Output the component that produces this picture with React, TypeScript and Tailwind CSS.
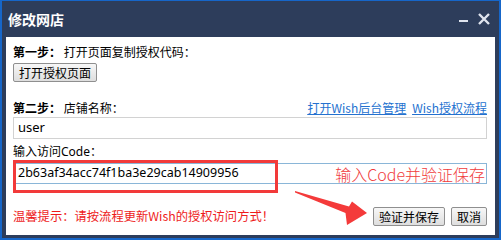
import React from 'react'

const font = { fontFamily: "'Noto Sans CJK SC', 'Noto Sans', sans-serif" }
const latin = { fontFamily: "'Noto Sans', 'Noto Sans CJK SC', sans-serif" }

function Btn({ children }: { children: React.ReactNode }) {
  return (
    <button className="h-[19px] px-[5px] rounded-[2px] border border-[#8f8f8f] bg-gradient-to-b from-[#f7f7f7] to-[#dedede] text-[12px] leading-none text-black">
      {children}
    </button>
  )
}

export default function App() {
  return (
    <div className="relative w-[501px] h-[240px] bg-[#1666c9] pt-[1px] px-[2px] pb-[2px]" style={font}>
      <div className="flex flex-col h-full bg-[#2d3d5b]">
        {/* Title bar */}
        <div className="flex items-center h-[36px] pl-[6px] pr-[9px]">
          <span className="text-white font-bold text-[14px] leading-none">修改网店</span>
          <div className="ml-auto flex items-center gap-[9px]">
            <svg width="10" height="12" viewBox="0 0 10 12">
              <rect x="0" y="7" width="9" height="2" fill="#dfe4ee" />
            </svg>
            <svg width="12" height="12" viewBox="0 0 12 12">
              <path d="M1 1 L11 11 M11 1 L1 11" stroke="#dfe4ee" strokeWidth="2.4" />
            </svg>
          </div>
        </div>

        {/* Body */}
        <div className="flex-1 mx-[4px] mb-[3px] bg-white pl-[7px] pr-[8px] pt-[7px] flex flex-col text-[12px] text-black">
          <div className="h-[16px] leading-[16px] whitespace-pre">
            <span className="font-bold">第一步：</span> 打开页面复制授权代码：
          </div>
          <div className="mt-[3px]">
            <Btn>打开授权页面</Btn>
          </div>

          <div className="mt-[18px] h-[16px] leading-[16px] flex">
            <span className="whitespace-pre">
              <span className="font-bold">第二步：</span> 店铺名称：
            </span>
            <span className="ml-auto flex gap-[6px] text-[#2471cf] underline">
              <a>打开Wish后台管理</a>
              <a>Wish授权流程</a>
            </span>
          </div>
          <div className="mt-[1px] h-[22px] border border-[#d2d2d2] flex items-center pl-[4px] text-[13px]" style={latin}>
            user
          </div>

          <div className="mt-[4px] h-[16px] leading-[16px]">
            输入访问<span style={latin}>Code</span>：
          </div>
          <div className="mt-[4px] h-[21px] border border-[#8ab6d8] flex items-center pl-[4px] pr-[1px]">
            <span className="text-[12.5px]" style={latin}>2b63af34acc74f1ba3e29cab14909956</span>
            <span className="ml-auto text-[16px] leading-none text-[#f03c3c] font-light">输入Code并验证保存</span>
          </div>

          <div className="mt-[23px] flex items-center">
            <span className="text-[12.3px] text-[#ee1c1c]">温馨提示：请按流程更新Wish的授权访问方式！</span>
            <div className="ml-auto flex gap-[6px]">
              <Btn>验证并保存</Btn>
              <Btn>取消</Btn>
            </div>
          </div>
        </div>
      </div>

      {/* Annotation overlay */}
      <svg className="absolute inset-0 pointer-events-none" width="501" height="240" viewBox="0 0 501 240">
        <rect x="14.5" y="161.5" width="262" height="30" fill="none" stroke="#f23a3a" strokeWidth="3" />
        <polygon
          points="295,191 349,206.5 352,201.5 367,213 347,225 345.5,213 295,192.5"
          fill="#f43a3a"
        />
      </svg>
    </div>
  )
}
